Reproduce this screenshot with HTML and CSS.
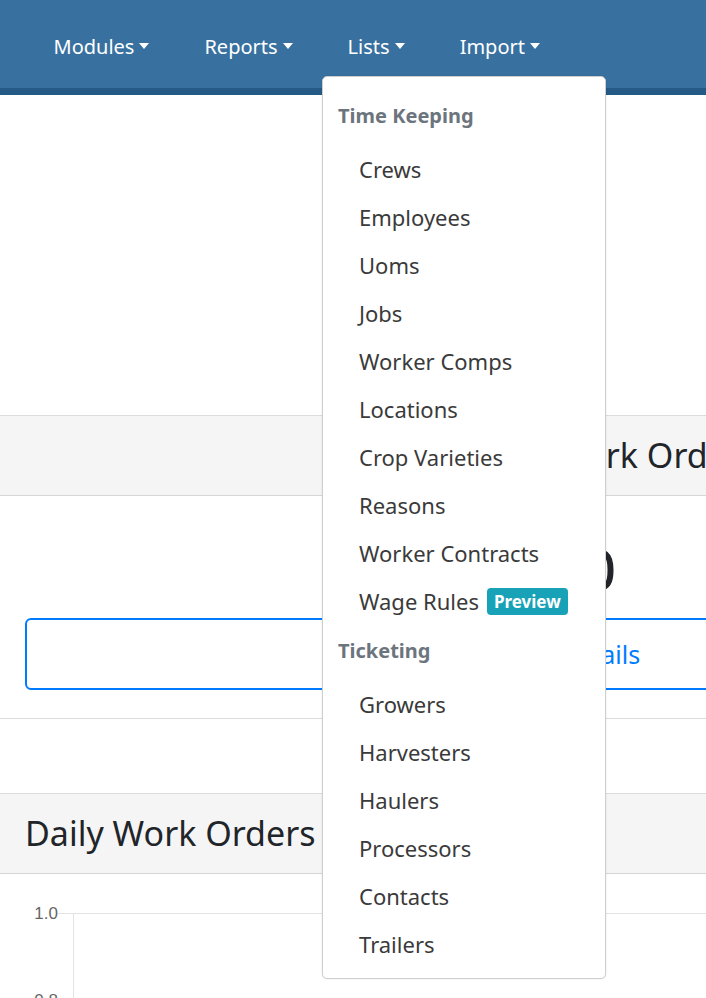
FILE: index.html
```html
<!DOCTYPE html>
<html lang="en">
<head>
    <meta charset="UTF-8">
    <meta name="viewport" content="width=device-width, initial-scale=1.0">
    <title>Dashboard</title>
    <link rel="stylesheet" href="styles.css">
</head>
<body>

    <nav class="topbar">
        <ul class="nav-links">
            <li class="nav-item"><a href="#">Modules</a><span class="caret"></span></li>
            <li class="nav-item"><a href="#">Reports</a><span class="caret"></span></li>
            <li class="nav-item open"><a href="#">Lists</a><span class="caret"></span></li>
            <li class="nav-item"><a href="#">Import</a><span class="caret"></span></li>
        </ul>

        <div class="dropdown-menu">
            <h6 class="dropdown-header">Time Keeping</h6>
            <a class="dropdown-item" href="#">Crews</a>
            <a class="dropdown-item" href="#">Employees</a>
            <a class="dropdown-item" href="#">Uoms</a>
            <a class="dropdown-item" href="#">Jobs</a>
            <a class="dropdown-item" href="#">Worker Comps</a>
            <a class="dropdown-item" href="#">Locations</a>
            <a class="dropdown-item" href="#">Crop Varieties</a>
            <a class="dropdown-item" href="#">Reasons</a>
            <a class="dropdown-item" href="#">Worker Contracts</a>
            <a class="dropdown-item" href="#">Wage Rules <span class="badge">Preview</span></a>
            <h6 class="dropdown-header">Ticketing</h6>
            <a class="dropdown-item" href="#">Growers</a>
            <a class="dropdown-item" href="#">Harvesters</a>
            <a class="dropdown-item" href="#">Haulers</a>
            <a class="dropdown-item" href="#">Processors</a>
            <a class="dropdown-item" href="#">Contacts</a>
            <a class="dropdown-item" href="#">Trailers</a>
        </div>
    </nav>

    <main class="content">
        <section class="card card-summary">
            <div class="card-header centered">Open Work Orders</div>
            <div class="card-body">
                <div class="big-number">0</div>
                <a class="btn-outline" href="#">Details</a>
            </div>
        </section>

        <section class="card card-chart">
            <div class="card-header">Daily Work Orders</div>
            <div class="card-body chart-body">
                <svg class="chart" width="1175" height="140">
                    <line x1="58" y1="39.5" x2="1175" y2="39.5" stroke="#e3e3e3" stroke-width="1"/>
                    <line x1="58" y1="126.5" x2="1175" y2="126.5" stroke="#e3e3e3" stroke-width="1"/>
                    <line x1="73.5" y1="39" x2="73.5" y2="140" stroke="#e3e3e3" stroke-width="1"/>
                    <text x="58" y="45" text-anchor="end" class="tick">1.0</text>
                    <text x="58" y="132" text-anchor="end" class="tick">0.8</text>
                </svg>
            </div>
        </section>
    </main>

</body>
</html>
```

FILE: styles.css
```css
body {
    margin: 0;
    font-family: "Noto Sans", "Open Sans", sans-serif;
    color: #212529;
    background-color: white;
    overflow: hidden;
    height: 998px;
}

.topbar {
    position: relative;
    height: 88px;
    background-color: #3871a0;
    border-bottom: 7px solid #255a87;
}

.nav-links {
    list-style: none;
    margin: 0;
    padding: 4px 0 0 26px;
    display: flex;
    height: 84px;
    align-items: center;
}

.nav-item {
    display: flex;
    align-items: center;
    padding: 0 27.5px;
    font-size: 20px;
}

.nav-item a {
    color: white;
    text-decoration: none;
}

.caret {
    display: inline-block;
    margin-left: 5px;
    border-top: 6px solid white;
    border-left: 5.5px solid transparent;
    border-right: 5.5px solid transparent;
}

.dropdown-menu {
    position: absolute;
    top: 76px;
    left: 322px;
    width: 282px;
    padding: 13px 0 10px;
    background-color: white;
    border: 1px solid #cfcfcf;
    border-radius: 5px;
    box-shadow: 0 0 2px rgba(0, 0, 0, 0.12);
    z-index: 10;
}

.dropdown-header {
    margin: 0;
    padding: 11px 15px 14px;
    font-size: 20px;
    line-height: 30px;
    font-weight: 700;
    color: #6c757d;
}

.dropdown-item {
    display: flex;
    align-items: center;
    padding: 9px 36px;
    font-size: 22px;
    line-height: 30px;
    color: #3a3a3a;
    text-decoration: none;
}

.badge {
    margin-left: 8px;
    padding: 0 7px;
    background-color: #17a2b8;
    color: white;
    font-size: 17px;
    line-height: 27px;
    font-weight: 700;
    border-radius: 4px;
}

.content {
    padding-top: 320px;
}

.card {
    width: 1175px;
    border-top: 1px solid #dcdcdc;
    border-bottom: 1px solid #dcdcdc;
}

.card-header {
    height: 79px;
    line-height: 79px;
    padding: 0 25px;
    font-size: 34px;
    background-color: #f5f5f5;
    border-bottom: 1px solid #d6d6d6;
}

.card-header.centered {
    padding-left: 65px;
    text-align: center;
}

.card-summary .card-body {
    padding: 22px 0 28px 25px;
}

.big-number {
    height: 100px;
    line-height: 100px;
    text-align: center;
    font-size: 56px;
    font-weight: 500;
}

.btn-outline {
    display: block;
    height: 68px;
    line-height: 68px;
    text-align: center;
    font-size: 25px;
    color: #007bff;
    text-decoration: none;
    border: 2px solid #007bff;
    border-radius: 6px;
}

.card-chart {
    margin-top: 74px;
    border-bottom: none;
}

.chart-body {
    height: 140px;
}

.chart {
    display: block;
}

.tick {
    font-family: "Liberation Sans", Arial, sans-serif;
    font-size: 17px;
    fill: #666;
}
```
